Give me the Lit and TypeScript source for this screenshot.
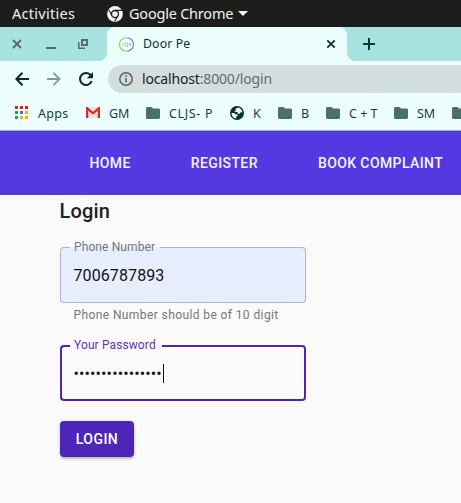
import { LitElement, html, css, svg } from "lit";
import { customElement, property } from "lit/decorators.js";

const icons: Record<string, unknown> = {
  chrome: html`<svg width="16" height="16" viewBox="0 0 16 16"><circle cx="8" cy="8" r="7.9" fill="#f4f4f4"/><circle cx="8" cy="8" r="3.5" fill="none" stroke="#1d1d1d" stroke-width="1.3"/><g stroke="#1d1d1d" stroke-width="1.1" fill="none"><path d="M8 4.4h6.8M5 9.7L1.8 4M11 9.7L7.6 15.6"/></g></svg>`,
  close: html`<svg width="10" height="10" viewBox="0 0 10 10"><path d="M1 1l8 8M9 1L1 9" stroke="#5d6a69" stroke-width="2"/></svg>`,
  minimize: html`<svg width="10" height="10" viewBox="0 0 10 10"><path d="M0 9h10" stroke="#5d6a69" stroke-width="2"/></svg>`,
  restore: html`<svg class="restore" width="10" height="10" viewBox="0 0 10 10" fill="none" stroke="#5d6a69"><path d="M4 1h5v5H4z" stroke-width="2"/><path d="M.75 3v6.25H7" stroke-width="1.5"/></svg>`,
  tabclose: html`<svg width="10" height="10" viewBox="0 0 10 10"><path d="M1.3 1.3l7.4 7.4M8.7 1.3L1.3 8.7" stroke="#063631" stroke-width="1.8"/></svg>`,
  plus: html`<svg width="12" height="12" viewBox="0 0 12 12"><path d="M6 0v12M0 6h12" stroke="#063631" stroke-width="2"/></svg>`,
  back: html`<svg width="14" height="14" viewBox="0 0 14 14" fill="none" stroke="#032b27" stroke-width="2"><path d="M14 7H1.5M7.5 .8L1.4 7l6.1 6.2"/></svg>`,
  forward: html`<svg width="14" height="14" viewBox="0 0 14 14" fill="none" stroke="#819b98" stroke-width="1.8"><path d="M0 7h12.5M6.5 .8L12.6 7l-6.1 6.2"/></svg>`,
  reload: html`<svg width="14" height="14" viewBox="0 0 14 14"><path d="M11.7 3.2A6 6 0 1 0 12.7 9" fill="none" stroke="#032b27" stroke-width="2"/><path d="M14 0v6.2H7.8z" fill="#032b27"/></svg>`,
  info: html`<svg width="14" height="14" viewBox="0 0 14 14"><circle cx="7" cy="7" r="6.2" fill="none" stroke="#5c6362" stroke-width="1.5"/><path d="M7 6v4.6M7 3.3v1.6" stroke="#5c6362" stroke-width="1.6"/></svg>`,
  folder: html`<svg width="14" height="12" viewBox="0 0 14 12"><path d="M1.4 0H5.5L7 1.5h5.6A1.4 1.4 0 0 1 14 2.9v7.7a1.4 1.4 0 0 1-1.4 1.4H1.4A1.4 1.4 0 0 1 0 10.6V1.4A1.4 1.4 0 0 1 1.4 0z" fill="#49706c"/></svg>`,
  apps: html`<svg width="14" height="14" viewBox="0 0 14 14">${["#f01818", "#f01818", "#f01818", "#11a45c", "#2474f2", "#fba90a", "#11a45c", "#fba90a", "#fba90a"].map((c, i) => svg`<rect x=${(i % 3) * 5} y=${Math.floor(i / 3) * 5} width="3" height="3" fill=${c} />`)}</svg>`,
  gmail: html`<svg width="14" height="11" viewBox="0 0 14 11"><path d="M0 0h14v11H0z" fill="#e7e5e5"/><path d="M2 10.5l4-5M12 10.5l-4-5" stroke="#d2cfcf"/><path d="M1.1 11V1.2L7 6.4l5.9-5.2V11" fill="none" stroke="#dc2922" stroke-width="2.2"/></svg>`,
  globe: html`<svg width="14" height="14" viewBox="0 0 14 14"><circle cx="7" cy="7" r="7" fill="#07312d"/><path d="M8.3 1.6L5.6 2.7v1.7L4.3 5.8l2.9.3.9 1.6h1.6l1.2-1.6 1.5.4a5.6 5.6 0 0 0-4.1-4.9zM1.5 6.9l2.8.1 1.6 1.5h1.7v1.6l-1.5.5.2 1.8A5.5 5.5 0 0 1 1.5 6.9z" fill="#edfffd"/></svg>`,
};

@customElement("desktop-bar")
export class DesktopBar extends LitElement {
  static styles = css`
    :host { display: flex; align-items: center; height: 27px; background: #1d1d1d; color: #f1f1f1; font: 14.5px/27px "Noto Sans", sans-serif; white-space: nowrap; }
    .activities { width: 95px; padding-left: 12px; letter-spacing: 0.28px; }
    .logo { display: flex; width: 22px; }
    .app { width: 109px; letter-spacing: -0.22px; }
    .caret { border: 5px solid transparent; border-top-color: #f1f1f1; border-bottom: 0; }
  `;
  render() {
    return html`<span class="activities">Activities</span><span class="logo">${icons.chrome}</span><span class="app">Google Chrome</span><span class="caret"></span>`;
  }
}

@customElement("tab-strip")
export class TabStrip extends LitElement {
  static styles = css`
    :host { display: grid; grid-template-columns: 107px 240px 1fr; height: 34px; background: linear-gradient(#a8e3df 50%, #edfffd 50%); }
    .side { display: flex; align-items: center; background: #a8e3df; }
    .left { border-bottom-right-radius: 8px; padding-left: 12px; gap: 24px; }
    .restore { margin-left: -2px; }
    .right { border-bottom-left-radius: 8px; padding-left: 16px; }
    .tab { display: flex; align-items: center; background: #edfffd; border-radius: 8px 8px 0 0; padding: 0 11px 0 12px; }
    .title { flex: 1; margin-left: 9px; color: #063631; font: 12.3px/34px "Noto Sans", sans-serif; letter-spacing: 0.12px; }
  `;
  render() {
    return html`
      <div class="side left">${icons.close}${icons.minimize}${icons.restore}</div>
      <div class="tab">
        <svg width="15" height="15" viewBox="0 0 15 15" fill="none" stroke-width="1.1">
          <path d="M7.2.8a6.7 6.7 0 0 0 0 13.4" stroke="#83d84b" /><path d="M7.8.8a6.7 6.7 0 0 1 0 13.4" stroke="#6b7fd0" />
          <text x="2.4" y="9.3" font-size="6" font-family="Noto Sans, sans-serif" font-weight="600" textLength="10" fill="#a5cf8c">cl<tspan fill="#98a5dc">js</tspan></text>
        </svg>
        <span class="title">Door Pe</span>${icons.tabclose}
      </div>
      <div class="side right">${icons.plus}</div>`;
  }
}

@customElement("browser-toolbar")
export class BrowserToolbar extends LitElement {
  static styles = css`
    :host { display: flex; align-items: center; height: 36px; background: #edfffd; }
    .nav { display: flex; gap: 18px; width: 93px; padding-left: 15px; flex: none; }
    .address { display: flex; align-items: center; flex: 1; height: 28px; padding-left: 11px; background: #d3dfde; border-radius: 14px 0 0 14px; color: #646b6a; }
    .url { margin-left: 9px; font: 14px/28px "Noto Sans", sans-serif; letter-spacing: -0.16px; }
    .host { color: #162322; }
  `;
  render() {
    return html`<div class="nav">${icons.back}${icons.forward}${icons.reload}</div>
      <div class="address">${icons.info}<span class="url"><span class="host">localhost</span>:8000/login</span></div>`;
  }
}

const bookmarks = [
  { icon: "apps", label: "Apps", width: 71, spacing: 0.3 },
  { icon: "gmail", label: "GM", width: 60, spacing: -0.1 },
  { icon: "folder", label: "CLJS- P", width: 84, spacing: 0.65 },
  { icon: "globe", label: "K", width: 48, spacing: 0 },
  { icon: "folder", label: "B", width: 48, spacing: 0 },
  { icon: "folder", label: "C + T", width: 68, spacing: 0 },
  { icon: "folder", label: "SM", width: 58, spacing: 0 },
  { icon: "folder", label: "", width: 14, spacing: 0 },
];

@customElement("bookmark-bar")
export class BookmarkBar extends LitElement {
  static styles = css`
    :host { display: flex; align-items: center; height: 33px; padding-left: 15px; background: #edfffd; border-bottom: 1px solid #9ab1b0; overflow: hidden; color: #123d39; font: 12.5px/30px "Noto Sans", sans-serif; white-space: nowrap; }
    .item { display: flex; align-items: center; gap: 9px; flex: none; height: 30px; }
    svg { flex: none; margin-bottom: 2px; }
  `;
  render() {
    return bookmarks.map((b) => html`<span class="item" style="width:${b.width}px">${icons[b.icon]}<span style="letter-spacing:${b.spacing}px">${b.label}</span></span>`);
  }
}

@customElement("outlined-field")
export class OutlinedField extends LitElement {
  @property() label = "";
  @property() value = "";
  @property({ type: Boolean, reflect: true }) filled = false;
  @property({ type: Boolean, reflect: true }) active = false;
  static styles = css`
    :host { display: block; position: relative; width: 246px; height: 56px; --line: #b1b3c8; --w: 1px; border-radius: 4px; font-family: Roboto, sans-serif; }
    :host([filled]) { background: #e8edff; }
    :host([active]) { --line: #4e25b8; --w: 2px; }
    .outline { display: flex; height: 100%; }
    .start { width: 10px; box-sizing: border-box; border: var(--w) solid var(--line); border-right: 0; border-radius: 4px 0 0 4px; }
    .notch { border-bottom: var(--w) solid var(--line); padding: 0 4px; box-sizing: border-box; width: 90px; }
    :host([active]) .notch { width: 92px; }
    .end { flex: 1; border: var(--w) solid var(--line); border-left: 0; border-radius: 0 4px 4px 0; }
    .label { display: block; margin-top: -8px; font-size: 12px; line-height: 16px; letter-spacing: 0.11px; color: #777; white-space: nowrap; }
    :host([active]) .label { color: #5c35be; }
    .value { position: absolute; inset: 0 14px 0 13.5px; display: flex; align-items: center; font-size: 16px; letter-spacing: 0.1px; color: #111; }
    .dots { font-size: 16px; letter-spacing: 0.12px; }
    .caret { width: 1px; height: 19px; background: #111; margin-left: 1px; }
  `;
  render() {
    return html`<div class="outline"><span class="start"></span><span class="notch"><span class="label">${this.label}</span></span><span class="end"></span></div>
      <div class="value"><span class=${this.active ? "dots" : ""}>${this.value}</span>${this.active ? html`<span class="caret"></span>` : ""}</div>`;
  }
}

@customElement("app-root")
export class AppRoot extends LitElement {
  static styles = css`
    :host { display: block; width: 461px; height: 503px; overflow: hidden; background: #fafafa; font-family: Roboto, sans-serif; }
    .menu { display: flex; align-items: center; gap: 60px; height: 64px; padding-left: 89.4px; background: #5439e2; color: #f7f4ff; font-size: 14px; font-weight: 500; letter-spacing: 0.4px; white-space: nowrap; }
    .page { display: flex; flex-direction: column; align-items: flex-start; padding-left: 60px; }
    .heading { margin: 0 0 0 -0.5px; height: 52px; font-size: 20px; line-height: 32px; font-weight: 500; letter-spacing: 0.15px; color: #212121; }
    .hint { margin: 0 0 22px 13.5px; height: 20px; font-size: 12px; line-height: 24px; letter-spacing: 0.4px; color: #777; }
    .submit { margin-top: 20px; width: 74px; height: 36px; padding: 0; border: 0; border-radius: 4px; background: #4e25b8; color: #fff; font: 500 14px/36px Roboto, sans-serif; letter-spacing: 0.45px; box-shadow: 0 2px 3px -1px rgba(0,0,0,.3), 0 1px 4px rgba(0,0,0,.15); }
  `;
  render() {
    return html`
      <desktop-bar></desktop-bar>
      <tab-strip></tab-strip>
      <browser-toolbar></browser-toolbar>
      <bookmark-bar></bookmark-bar>
      <nav class="menu"><span>HOME</span><span>REGISTER</span><span>BOOK COMPLAINT</span></nav>
      <main class="page">
        <h1 class="heading">Login</h1>
        <outlined-field filled label="Phone Number" value="7006787893"></outlined-field>
        <p class="hint">Phone Number should be of 10 digit</p>
        <outlined-field active label="Your Password" value="••••••••••••••••"></outlined-field>
        <button class="submit">LOGIN</button>
      </main>`;
  }
}
